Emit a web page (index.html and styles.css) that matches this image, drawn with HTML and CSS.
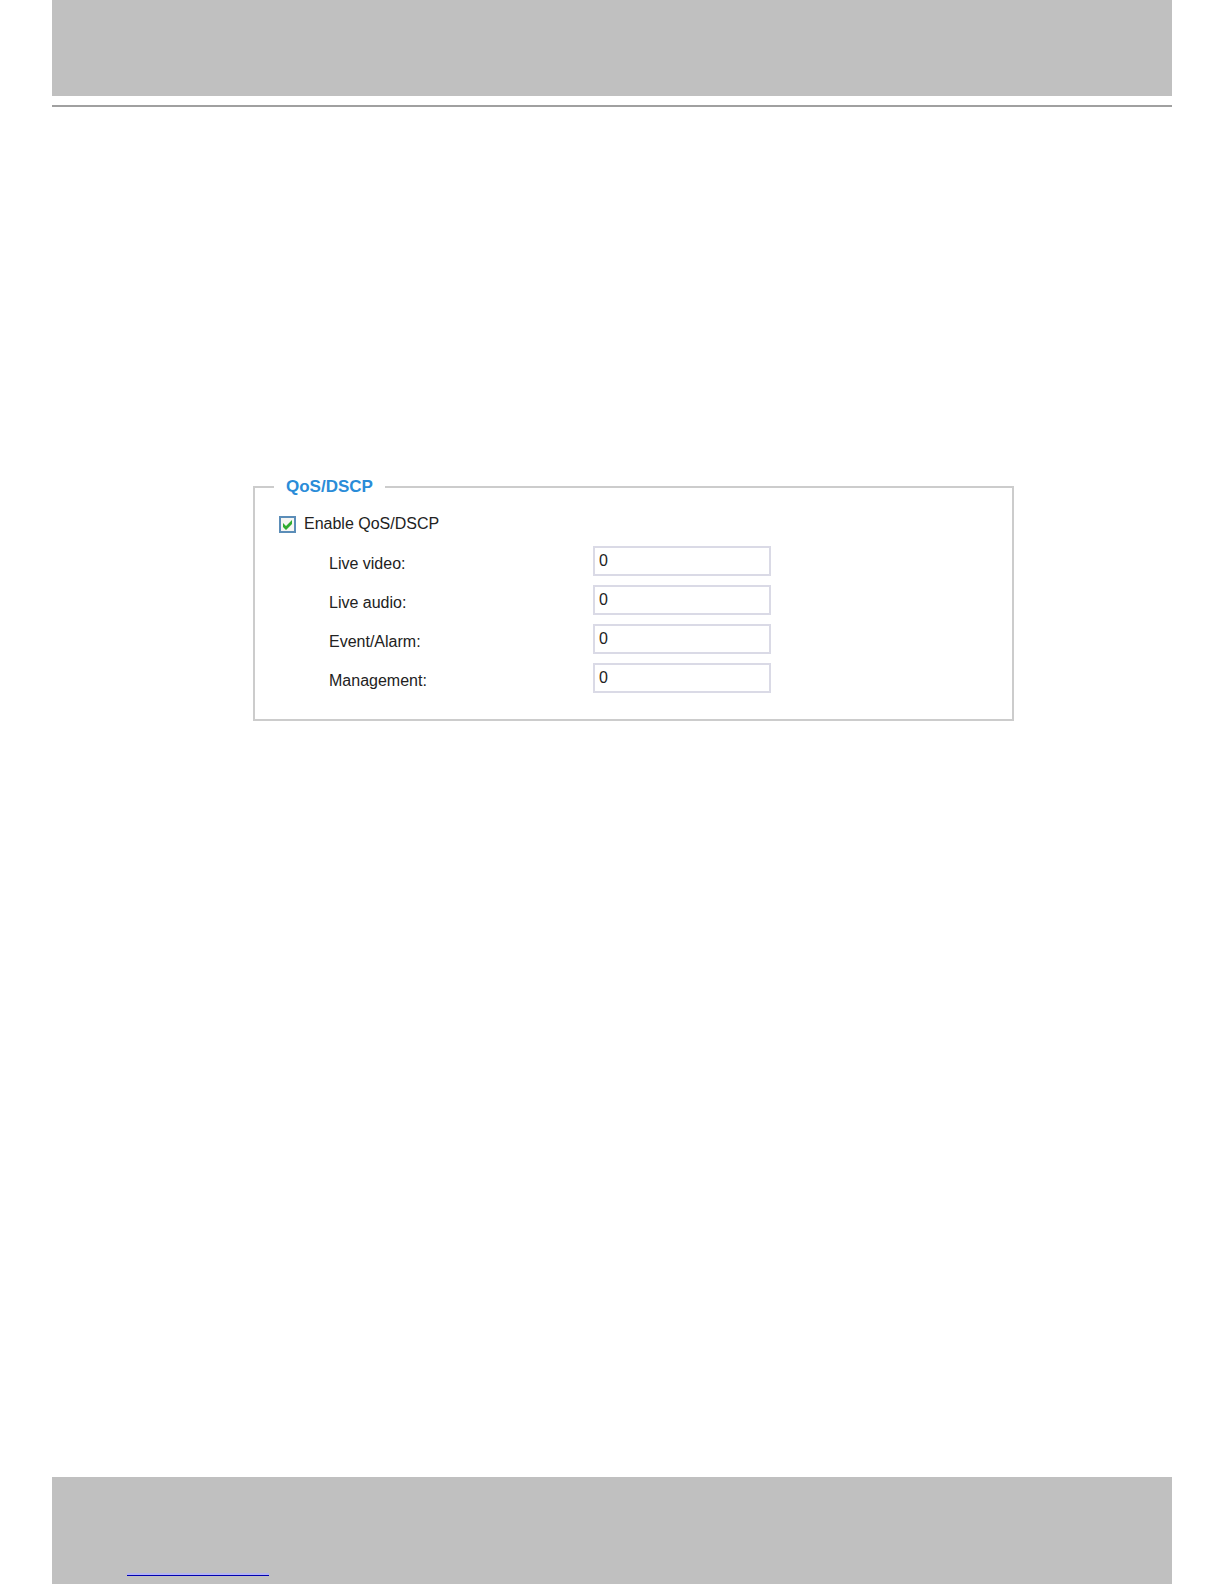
FILE: index.html
```html
<!DOCTYPE html>
<html lang="en">

<head>
    <meta charset="UTF-8">
    <meta name="viewport" content="width=device-width, initial-scale=1.0">
    <title>QoS/DSCP</title>
    <link rel="stylesheet" href="styles.css">
</head>

<body>
    <header class="page-header"></header>

    <main class="content">
        <form>
            <fieldset class="qos">
                <legend>QoS/DSCP</legend>

                <div class="enable-row">
                    <span class="checkbox">
                        <input type="checkbox" id="enable-qos" checked>
                        <svg class="tick" viewBox="0 0 17 17" aria-hidden="true">
                            <path d="M4 7 L7 10 L13 4 L13 8 L7 14 L4 11 Z" fill="#2fac2f"/>
                        </svg>
                    </span>
                    <label for="enable-qos">Enable QoS/DSCP</label>
                </div>

                <div class="fields">
                    <label for="live-video">Live video:</label>
                    <input type="text" id="live-video" value="0">

                    <label for="live-audio">Live audio:</label>
                    <input type="text" id="live-audio" value="0">

                    <label for="event-alarm">Event/Alarm:</label>
                    <input type="text" id="event-alarm" value="0">

                    <label for="management">Management:</label>
                    <input type="text" id="management" value="0">
                </div>
            </fieldset>
        </form>
    </main>

    <footer class="page-footer">
        <a href="#" class="footer-link" aria-label="Website"></a>
    </footer>
</body>

</html>
```

FILE: styles.css
```css
* {
    box-sizing: border-box;
}

body {
    display: flex;
    flex-direction: column;
    min-height: 100vh;
    margin: 0;
    padding: 0 52px;
    background-color: #fff;
    color: #222;
    font-family: "Liberation Sans", Arial, sans-serif;
    font-size: 16px;
    line-height: 20px;
}

.page-header {
    height: 96px;
    background-color: #c0c0c0;
}

.content {
    flex: 1;
    margin-top: 9px;
    padding: 370px 158px 40px 201px;
    border-top: 2px solid #a0a0a0;
}

/* QoS settings */
.qos {
    margin: 0;
    padding: 0 19px 26px;
    border: 2px solid #cccccc;
}

.qos legend {
    padding: 0 12px;
    color: #2a8cd8;
    font-size: 17px;
    font-weight: bold;
}

.enable-row {
    display: flex;
    align-items: center;
    gap: 8px;
    margin-top: 17px;
    padding-left: 5px;
}

.checkbox {
    display: grid;
    width: 17px;
    height: 17px;
}

.checkbox input,
.checkbox .tick {
    grid-area: 1 / 1;
    width: 17px;
    height: 17px;
    margin: 0;
}

.checkbox input {
    appearance: none;
    border: 2px solid #5b8db8;
    background-color: #f6f6f3;
}

.checkbox .tick {
    pointer-events: none;
    visibility: hidden;
}

.checkbox input:checked + .tick {
    visibility: visible;
}

.fields {
    display: grid;
    grid-template-columns: 256px minmax(0, 178px);
    column-gap: 8px;
    row-gap: 9px;
    margin-top: 12px;
    padding-left: 55px;
}

.fields label {
    padding-top: 8px;
}

.fields input {
    width: 100%;
    height: 30px;
    padding: 0 4px;
    border: 2px solid #dadae6;
    background-color: #fff;
    color: #222;
    font: inherit;
}

/* Footer */
.page-footer {
    display: flex;
    align-items: flex-end;
    height: 107px;
    padding: 0 75px 8px;
    background-color: #c0c0c0;
}

.footer-link {
    width: 142px;
    border-top: 2px solid #b4b4f0;
    border-bottom: 1px solid #0000b0;
}
```
